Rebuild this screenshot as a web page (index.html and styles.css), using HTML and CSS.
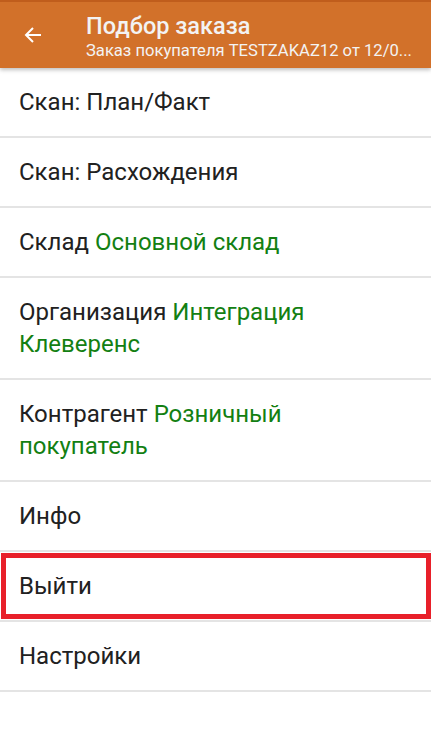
FILE: index.html
```html
<!DOCTYPE html>
<html lang="ru">
<head>
<meta charset="utf-8">
<link rel="stylesheet" href="styles.css">
</head>
<body>
<div class="app">
  <header class="bar">
    <div class="back">
      <svg width="18" height="18" viewBox="0 0 18 18"><path d="M17 9H2.5M9 2L2 9l7 7" fill="none" stroke="#fff" stroke-width="2"/></svg>
    </div>
    <div class="titles">
      <div class="title">Подбор заказа</div>
      <div class="subtitle">Заказ покупателя TESTZAKAZ12 от 12/0...</div>
    </div>
  </header>
  <ul class="list">
    <li class="item">Скан: План/Факт</li>
    <li class="item">Скан: Расхождения</li>
    <li class="item">Склад <span class="val">Основной склад</span></li>
    <li class="item tall">Организация <span class="val">Интеграция Клеверенс</span></li>
    <li class="item tall">Контрагент <span class="val">Розничный покупатель</span></li>
    <li class="item">Инфо</li>
    <li class="item marked">Выйти</li>
    <li class="item">Настройки</li>
  </ul>
</div>
</body>
</html>
```
FILE: styles.css
```css
* { box-sizing: border-box; }
html, body { margin: 0; padding: 0; background: #fff; }
body { font-family: Roboto, "Noto Sans", sans-serif; color: #212121; }
.app { width: 431px; }
.bar {
  height: 68px;
  background: #d2712a;
  border-top: 2px solid #c05d1c;
  display: flex;
  align-items: center;
  box-shadow: 0 2px 4px rgba(0,0,0,0.25);
  position: relative;
  z-index: 1;
}
.back { width: 86px; padding-left: 24px; display: flex; align-items: center; }
.titles { display: flex; flex-direction: column; color: #fff; padding-top: 2px; }
.title { font-size: 23.5px; font-weight: 500; line-height: 28px; color: #f3f3f3; }
.subtitle { font-size: 16.6px; line-height: 20px; margin-top: 1px; color: #f3f3f3; white-space: nowrap; }
.list { list-style: none; margin: 0; padding: 0; }
.item {
  font-size: 24px;
  line-height: 32px;
  padding: 18px 40px 18px 19px;
  height: 70px;
  border-bottom: 2px solid #e4e4e4;
  display: block;
}
.item.tall { height: 102px; }
.val { color: #138012; }
.marked { position: relative; }
.marked::after {
  content: "";
  position: absolute;
  left: 1px; right: 0; top: 1px; bottom: 1px;
  border: 5px solid #e8202a;
}
```
